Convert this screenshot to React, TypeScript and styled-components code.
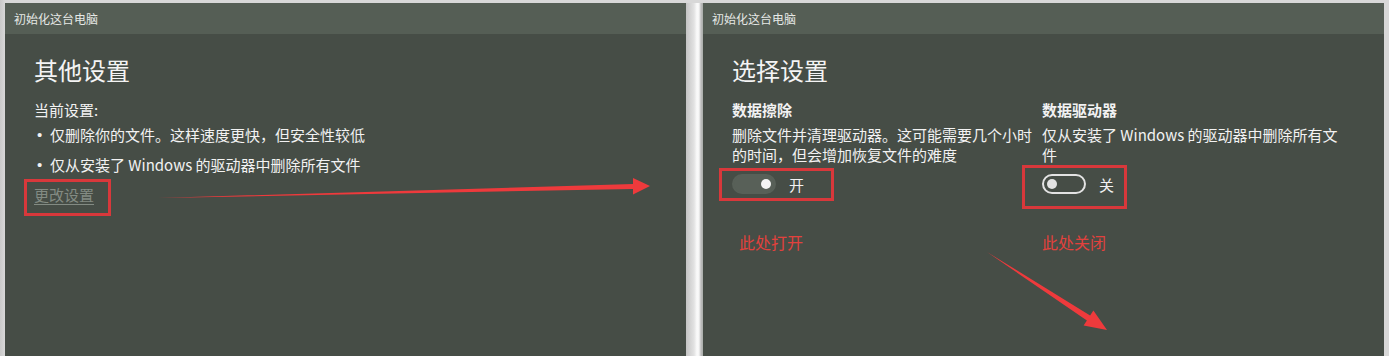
import React from "react";
import styled, { createGlobalStyle } from "styled-components";

const Global = createGlobalStyle`
  html, body { margin: 0; padding: 0; }
  body {
    background: #d6d6d6;
    font-family: "Noto Sans CJK SC", "Noto Sans", sans-serif;
    overflow: hidden;
  }
`;

const Page = styled.div`
  position: relative;
  width: 1389px;
  height: 356px;
  display: flex;
  padding: 3px 0 0 5px;
  box-sizing: border-box;
  background: linear-gradient(90deg, #c9c9c9 0, #d8d8d8 5px);
`;

const Window = styled.section`
  position: relative;
  width: 681px;
  height: 353px;
  background: #464d46;
  display: flex;
  flex-direction: column;
  flex: none;
`;

const TitleBar = styled.div`
  height: 31px;
  background: #555e55;
  color: #e6e9e6;
  font-size: 12px;
  line-height: 31px;
  padding-left: 9px;
  flex: none;
`;

const Body = styled.div`
  padding: 20px 29px 0;
  color: #f2f2f2;
`;

const Heading = styled.h1`
  margin: 0;
  font-size: 24px;
  line-height: 32px;
  font-weight: 400;
  color: #f4f4f4;
`;

const Label = styled.div`
  margin-top: 14px;
  font-size: 15px;
  line-height: 20px;
`;

const List = styled.ul`
  margin: 0;
  padding: 0;
  list-style: none;
`;

const Item = styled.li`
  font-size: 15px;
  line-height: 30px;
  display: flex;
  &::before {
    content: "•";
    font-family: "Liberation Sans", sans-serif;
    font-size: 15px;
    width: 16px;
    padding-left: 3px;
    box-sizing: border-box;
  }
`;

const Link = styled.a`
  display: block;
  font-size: 15px;
  line-height: 30px;
  color: #838b83;
  text-decoration: underline;
  text-underline-offset: 3px;
`;

const Divider = styled.div`
  width: 17px;
  height: 353px;
  flex: none;
  background: linear-gradient(
    90deg,
    #c4c4c4 0,
    #d3d3d3 4px,
    #e2e2e2 8px,
    #fbfbfb 11px,
    #f5f5f5 13px,
    #bdbdbd 15px,
    #a9ada9 17px
  );
`;

const Columns = styled.div`
  display: grid;
  grid-template-columns: 300px 306px;
  column-gap: 10px;
  margin-top: 14px;
`;

const Column = styled.div`
  display: flex;
  flex-direction: column;
`;

const Title = styled.div`
  font-size: 15px;
  line-height: 20px;
  font-weight: 700;
`;

const Desc = styled.p`
  margin: 5px 0 0;
  font-size: 15px;
  line-height: 20px;
  height: 40px;
`;

const ToggleRow = styled.div`
  margin-top: 9px;
  display: flex;
  align-items: center;
  gap: 13px;
  height: 20px;
  font-size: 15px;
`;

const Track = styled.span<{ $on: boolean }>`
  position: relative;
  width: 44px;
  height: 20px;
  box-sizing: border-box;
  border-radius: 10px;
  background: ${(p) => (p.$on ? "#586058" : "transparent")};
  border: 2px solid ${(p) => (p.$on ? "#586058" : "#e3e3e3")};
  display: flex;
  align-items: center;
  justify-content: ${(p) => (p.$on ? "flex-end" : "flex-start")};
  padding: 0 3px;
  &::after {
    content: "";
    width: 10px;
    height: 10px;
    border-radius: 50%;
    background: ${(p) => (p.$on ? "#f4f4f4" : "#e3e3e3")};
  }
`;

const Note = styled.div<{ $indent?: number }>`
  margin-top: 38px;
  padding-left: ${(p) => p.$indent ?? 0}px;
  font-size: 16px;
  line-height: 20px;
  color: #e2413d;
`;

const Mark = styled.div<{ $l: number; $t: number; $w: number; $h: number }>`
  position: absolute;
  left: ${(p) => p.$l}px;
  top: ${(p) => p.$t}px;
  width: ${(p) => p.$w}px;
  height: ${(p) => p.$h}px;
  box-sizing: border-box;
  border: 3px solid #d8383b;
  pointer-events: none;
`;

const Overlay = styled.svg`
  position: absolute;
  left: 0;
  top: 0;
  pointer-events: none;
`;

export default function App() {
  return (
    <>
      <Global />
      <Page>
        <Window>
          <TitleBar>初始化这台电脑</TitleBar>
          <Body>
            <Heading>其他设置</Heading>
            <Label>当前设置:</Label>
            <List>
              <Item>仅删除你的文件。这样速度更快，但安全性较低</Item>
              <Item>仅从安装了 Windows 的驱动器中删除所有文件</Item>
            </List>
            <Link>更改设置</Link>
          </Body>
          <Mark $l={19} $t={176} $w={87} $h={37} />
        </Window>
        <Divider />
        <Window>
          <TitleBar>初始化这台电脑</TitleBar>
          <Body>
            <Heading>选择设置</Heading>
            <Columns>
              <Column>
                <Title>数据擦除</Title>
                <Desc>删除文件并清理驱动器。这可能需要几个小时的时间，但会增加恢复文件的难度</Desc>
                <ToggleRow>
                  <Track $on />
                  <span>开</span>
                </ToggleRow>
                <Note $indent={7}>此处打开</Note>
              </Column>
              <Column>
                <Title>数据驱动器</Title>
                <Desc>仅从安装了 Windows 的驱动器中删除所有文件</Desc>
                <ToggleRow>
                  <Track $on={false} />
                  <span>关</span>
                </ToggleRow>
                <Note>此处关闭</Note>
              </Column>
            </Columns>
          </Body>
          <Mark $l={16} $t={165} $w={115} $h={33} />
          <Mark $l={319} $t={162} $w={105} $h={44} />
        </Window>
        <Overlay width="1389" height="356" viewBox="0 0 1389 356">
          <polygon
            points="158,198 633,184 633,178 650,186 633,194.5 633,189"
            fill="#ee3a3c"
          />
          <polygon
            points="987,252 1090.1,315.5 1093.4,310.4 1107,330 1083.6,325.6 1086.9,320.5"
            fill="#ee3a3c"
          />
        </Overlay>
      </Page>
    </>
  );
}
